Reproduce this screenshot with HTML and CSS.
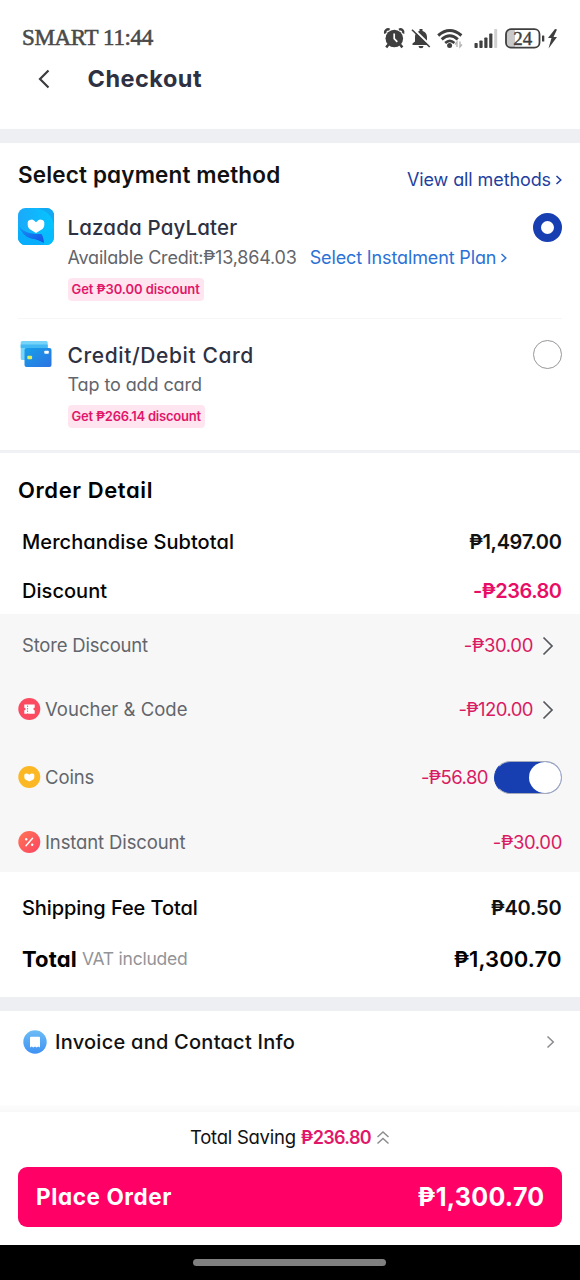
FILE: index.html
```html
<!DOCTYPE html>
<html lang="en">
<head>
<meta charset="utf-8">
<title>Checkout</title>
<link rel="stylesheet" href="styles.css">
</head>
<body>
<div class="status-bar">
  <span class="status-text">SMART 11:44</span>
  <svg class="status-icons" width="180" height="26" viewBox="0 0 180 26">
    <g fill="#3f3f3f" stroke="#3f3f3f">
      <circle cx="14.3" cy="13.5" r="8.800" stroke="none"/>
      <path d="M5.400 8.500 A3 3 0 0 1 9.600 4.700 M19 4.700 A3 3 0 0 1 23.200 8.500" fill="none" stroke-width="2.400"/>
      <path d="M8.500 19.500 L6.200 22.300 M20 19.500 L22.400 22.300" fill="none" stroke-width="2.600"/>
      <path d="M14.2 8.500 V13.700 L17.300 16.800" fill="none" stroke="#fff" stroke-width="1.700"/>
      <path d="M32.500 20 V18.500 L35 16.500 V12 C35 8.500 37.500 6.500 39.500 6 V4 H42.500 V6 C45 6.500 47 8.500 47 12 V16.500 L49 18.500 V20 Z" stroke="none"/>
      <path d="M38.500 21 H43.500 A2.500 2.300 0 0 1 38.500 21" stroke="none"/>
      <path d="M33.500 4 L51 21" stroke="#fff" stroke-width="2.200"/>
      <path d="M32 4.700 L49.700 22" stroke-width="1.600"/>
      <g fill="none" stroke-width="3">
        <path d="M58.200 10.500 Q69.800 0.500 81.400 10.500"/>
        <path d="M61.700 14.300 Q69.800 7.300 77.800 14.300"/>
        <path d="M65.200 18 Q69.800 13.800 74.400 18" stroke-width="2.600"/>
      </g>
      <circle cx="69.600" cy="20.600" r="2.500" stroke="none"/>
      <path d="M77 22 V17 L75 19.500 M80 16.500 V21.800 L82 19.500" fill="none" stroke="#b5b5b5" stroke-width="1.400"/>
      <g stroke="none">
        <rect x="94.500" y="18" width="3.200" height="5" rx=".8"/>
        <rect x="99.400" y="15.500" width="3.200" height="7.500" rx=".8"/>
        <rect x="104.300" y="12.500" width="3.200" height="10.500" rx=".8"/>
        <rect x="109.200" y="8.500" width="3.200" height="14.500" rx=".8"/>
        <rect x="114.200" y="4" width="3" height="19" rx=".8" fill="#d0d0d0"/>
      </g>
      <path d="M129 4.500 H135 V22.500 H129 Q126 22 126 19 V8 Q126 5 129 4.500" fill="#c9c9c9" stroke="none"/>
      <rect x="126" y="4.200" width="33.500" height="18.500" rx="5" fill="none" stroke-width="1.800"/>
      <rect x="162" y="10.500" width="2.300" height="6" rx=".5" stroke="none"/>
      <path d="M175 4 L168 13 H171.500 L168.500 23.500 L177 12 H173.500 L177 4.500 Z" stroke="none"/>
      <text class="battery-text" x="142.700" y="20" text-anchor="middle" stroke-width=".4">24</text>
    </g>
  </svg>
</div>
<header class="header">
  <svg width="14" height="22" viewBox="0 0 14 22"><path d="M12.500 2.500 L4 11 L12.500 19.500" fill="none" stroke="#3b3b40" stroke-width="2.200"/></svg>
  <h1 class="header-title">Checkout</h1>
</header>
<div class="band"></div>

<section class="payment">
  <div class="payment-head">
    <h2 class="section-title">Select payment method</h2>
    <a class="all-methods">View all methods<svg width="8" height="12" viewBox="0 0 8 12"><path d="M1.500 2 L5.800 6 L1.500 10" fill="none" stroke="currentColor" stroke-width="1.500"/></svg></a>
  </div>

  <div class="method">
    <svg class="method-icon" width="36" height="37" viewBox="0 0 36 37">
      <defs>
        <linearGradient id="app" x1="0" y1="0" x2="1" y2="0"><stop offset="0" stop-color="#1ba9fb"/><stop offset="1" stop-color="#04c5fd"/></linearGradient>
        <linearGradient id="fold" x1="0" y1="0" x2="1" y2="1"><stop offset="0" stop-color="#159bf8"/><stop offset="1" stop-color="#1551e6"/></linearGradient>
        <clipPath id="tile"><rect width="36" height="37" rx="7.500"/></clipPath>
      </defs>
      <g clip-path="url(#tile)">
        <rect width="36" height="37" fill="url(#app)"/>
        <path d="M20 0 H36 V16 C34 8 29 3 20 0" fill="#12a8f2"/>
        <path d="M0 16 C5 24 13 26.500 24 26 L36 20 V37 H0 Z" fill="#08bbfd"/>
        <path d="M0 17 C5 24.500 13 26.500 23.500 26 Q25.500 29 26 35 Q21 32 13 31 Q4 28 0 17" fill="url(#fold)"/>
        <path d="M0 20 Q4 28.500 13 30.500 Q22 31.500 26.500 37 H0 Z" fill="#08adfc"/>
      </g>
      <path d="M18 25 L11.500 21 Q9.700 19.700 9.700 17 V14.500 Q9.700 12.700 11.500 12 L14 11.500 Q15.500 11.500 18 14.200 Q20.500 11.500 22 11.500 L24.500 12 Q26.300 12.700 26.300 14.500 V17 Q26.300 19.700 24.500 21 Z" fill="#fff"/>
    </svg>
    <div class="method-body">
      <div class="method-name">Lazada PayLater</div>
      <div class="method-info"><span class="credit">Available Credit:₱13,864.03</span><a class="plan">Select Instalment Plan<svg width="8" height="12" viewBox="0 0 8 12"><path d="M1.500 2 L5.800 6 L1.500 10" fill="none" stroke="currentColor" stroke-width="1.500"/></svg></a></div>
      <span class="tag">Get ₱30.00 discount</span>
    </div>
    <span class="radio radio-on"></span>
  </div>

  <div class="method method-card">
    <svg class="method-icon" width="36" height="37" viewBox="0 0 36 37">
      <defs><linearGradient id="card" x1="0" y1="0" x2="1" y2="1"><stop offset="0" stop-color="#16a0e8"/><stop offset="1" stop-color="#2d72e2"/></linearGradient></defs>
      <rect x="2.700" y="5" width="27" height="19" rx="1.500" fill="#76d4fb"/>
      <rect x="2.700" y="8.500" width="27" height="3.500" fill="#42b9f2"/>
      <rect x="6.500" y="12" width="27" height="19" rx="2" fill="url(#card)"/>
      <rect x="9.300" y="19.700" width="4.800" height="3.600" rx="1" fill="#dff05e"/>
      <rect x="26.300" y="14.800" width="4.500" height="3" rx=".8" fill="#fff"/>
    </svg>
    <div class="method-body">
      <div class="method-name name-card">Credit/Debit Card</div>
      <div class="method-info">Tap to add card</div>
      <span class="tag tag-card">Get ₱266.14 discount</span>
    </div>
    <span class="radio"></span>
  </div>
</section>

<section class="order">
  <h2 class="order-title">Order Detail</h2>
  <div class="line subtotal"><span class="label">Merchandise Subtotal</span><span class="amount">₱1,497.00</span></div>
  <div class="line discount"><span class="label">Discount</span><span class="amount pink">-₱236.80</span></div>
  <div class="breakdown">
    <div class="item item-store"><span class="item-label">Store Discount</span><span class="item-amount">-₱30.00</span>
      <svg class="chevron" width="14" height="22" viewBox="0 0 14 22"><path d="M1.500 2.500 L10 11 L1.500 19.500" fill="none" stroke="#55585c" stroke-width="1.700"/></svg></div>
    <div class="item item-voucher">
      <svg class="badge" width="23" height="23" viewBox="0 0 23 23"><circle cx="11.300" cy="11" r="11" fill="#fb4b61"/><path d="M6.300 6.500 H16.700 V9.700 A1.300 1.300 0 0 0 16.700 12.300 V15.800 H6.300 V12.300 A1.300 1.300 0 0 0 6.300 9.700 Z" fill="#fff"/><path d="M9.600 7.500 V15.500" stroke="#fb4b61" stroke-width=".9" stroke-dasharray="1.500 1"/></svg>
      <span class="item-label voucher-label">Voucher &amp; Code</span><span class="item-amount amount-voucher">-₱120.00</span>
      <svg class="chevron" width="14" height="22" viewBox="0 0 14 22"><path d="M1.500 2.500 L10 11 L1.500 19.500" fill="none" stroke="#55585c" stroke-width="1.700"/></svg></div>
    <div class="item item-coins">
      <svg class="badge" width="23" height="23" viewBox="0 0 23 23"><circle cx="11.300" cy="11" r="11" fill="#fbb724"/><path d="M11.300 15.500 L7.300 13.400 Q6.300 12.700 6.300 11 V9 Q6.300 8 7.300 7.700 L8.500 7.400 Q9.600 7.200 11.300 8.700 Q13 7.200 14.100 7.400 L15.300 7.700 Q16.300 8 16.300 9 V11 Q16.300 12.700 15.300 13.400 Z" fill="#fff"/></svg>
      <span class="item-label coins-label">Coins</span><span class="item-amount amount-coins">-₱56.80</span>
      <span class="toggle"><span class="knob"></span></span></div>
    <div class="item item-instant">
      <svg class="badge" width="23" height="23" viewBox="0 0 23 23"><defs><linearGradient id="hot" x1="0" y1="0" x2="1" y2="1"><stop offset="0" stop-color="#ff7655"/><stop offset="1" stop-color="#fb4362"/></linearGradient></defs><circle cx="11.300" cy="11" r="11" fill="url(#hot)"/><path d="M8 14.700 L14.500 7.200" stroke="#fff" stroke-width="1.500" stroke-linecap="round"/><circle cx="8.200" cy="8.300" r="1.200" fill="#fff"/><circle cx="14.200" cy="13.800" r="1.200" fill="#fff"/></svg>
      <span class="item-label">Instant Discount</span><span class="item-amount">-₱30.00</span></div>
  </div>
  <div class="line shipping"><span class="label">Shipping Fee Total</span><span class="amount">₱40.50</span></div>
  <div class="line total"><span class="total-label">Total</span><span class="vat">VAT included</span><span class="total-amount">₱1,300.70</span></div>
</section>
<div class="band"></div>

<section class="invoice">
  <svg width="24" height="24" viewBox="0 0 24 24"><defs><linearGradient id="bill" x1="0" y1="0" x2="0" y2="1"><stop offset="0" stop-color="#6cbcf5"/><stop offset="1" stop-color="#3f92f4"/></linearGradient></defs><circle cx="12" cy="12" r="11.700" fill="url(#bill)"/><path d="M7 7.700 Q7 6.700 8 6.700 H16 Q17 6.700 17 7.700 V17.500 L15.300 16.500 L13.700 17.500 L12 16.500 L10.300 17.500 L8.700 16.500 L7 17.500 Z" fill="#fff"/></svg>
  <span class="invoice-label">Invoice and Contact Info</span>
  <svg width="10" height="16" viewBox="0 0 10 16"><path d="M1.500 2.500 L7.300 8 L1.500 13.500" fill="none" stroke="#8b8b8f" stroke-width="1.500"/></svg>
</section>

<footer class="footer">
  <div class="saving"><span class="saving-label">Total Saving</span><span class="saving-amount">₱236.80</span>
    <svg width="14" height="16" viewBox="0 0 14 16"><path d="M1.500 7 L7 2 L12.500 7 M1.500 13.500 L7 8.500 L12.500 13.500" fill="none" stroke="#8d8d90" stroke-width="1.500"/></svg></div>
  <button class="place"><span class="place-label">Place Order</span><span class="place-amount">₱1,300.70</span></button>
</footer>
<div class="nav"><span class="nav-pill"></span></div>
</body>
</html>
```
FILE: styles.css
```css
* { box-sizing: border-box; }
body {
  margin: 0;
  width: 580px;
  height: 1280px;
  display: flex;
  flex-direction: column;
  background: #fff;
  color: #111;
  font-family: Inter, "Open Sans", sans-serif;
  font-feature-settings: "cv11";
  line-height: 1;
  white-space: nowrap;
  overflow: hidden;
}
h1, h2 { margin: 0; font-weight: 600; }
svg { display: block; flex: none; }

.status-bar {
  height: 58px;
  padding: 18px 20px 0 22px;
  display: flex;
  justify-content: space-between;
  align-items: center;
}
.status-text { font: 23px "Liberation Serif", serif; letter-spacing: -0.35px; color: #4a4a4a; -webkit-text-stroke: 0.6px #4a4a4a; }
.battery-text { font: 19px "Liberation Serif", serif; }
.header { height: 71px; padding: 10px 0 0 36px; display: flex; align-items: flex-start; gap: 37.5px; }
.header-title { font-size: 23.5px; font-weight: 650; letter-spacing: 0.5px; line-height: 21px; color: #2e3142; }
.band { height: 14px; flex: none; background: #eeeff3; }

.payment { height: 310px; padding: 0 18px; border-bottom: 3px solid #f0f1f4; }
.payment-head { height: 62px; display: flex; justify-content: space-between; }
.section-title { font-size: 22.5px; letter-spacing: 0.15px; line-height: 64px; }
.all-methods {
  display: flex;
  align-items: center;
  gap: 4px;
  height: 74px;
  font-size: 18px;
  letter-spacing: -0.1px;
  color: #1f3f9f;
  margin-right: -1px;
}
.method { height: 113px; display: flex; align-items: flex-start; }
.method-card { height: 130px; padding-top: 14px; border-top: 1px solid #f6f6f7; }
.method-icon { margin-top: 3px; }
.method-body { flex: 1; padding-left: 13.5px; }
.method-name { height: 45px; line-height: 45px; font-size: 20.5px; font-weight: 500; letter-spacing: 0.16px; color: #2e3142; }
.name-card { height: 44px; font-size: 21px; letter-spacing: 0.6px; }
.method-info { height: 16px; display: flex; align-items: center; gap: 13px; font-size: 18px; letter-spacing: -0.1px; color: #62656b; }
.credit { letter-spacing: -0.2px; }
.plan { display: flex; align-items: center; gap: 4px; color: #2c72d6; letter-spacing: -0.13px; }
.tag {
  display: inline-block;
  height: 23px;
  margin-top: 11.5px;
  padding: 0 4px;
  border-radius: 4px;
  background: #ffe5f0;
  color: #e2176a;
  font-size: 13px;
  font-weight: 600;
  line-height: 23px;
  letter-spacing: -0.08px;
}
.tag-card { letter-spacing: -0.22px; }
.radio { width: 29px; height: 29px; margin-top: 7px; border: 1.5px solid #97979c; border-radius: 50%; }
.radio-on { margin-top: 8px; border: 8.5px solid #173fb1; }

.order { height: 544px; }
.order-title { height: 64px; padding: 4.5px 0 0 18px; font-size: 22px; line-height: 64px; letter-spacing: 0.6px; color: #000; }
.line { display: flex; align-items: center; justify-content: space-between; padding: 0 18.5px 0 22px; font-size: 20px; }
.label { font-weight: 500; color: #050505; }
.amount { font-weight: 600; letter-spacing: -0.35px; }
.pink { color: #e90e65; letter-spacing: -0.5px; }
.subtotal { height: 50px; }
.subtotal .label { letter-spacing: 0.07px; }
.discount { height: 47px; }
.discount .label { letter-spacing: 0.05px; }
.breakdown { height: 258px; background: #f7f7f7; }
.item { display: flex; align-items: center; padding: 0 18px; font-size: 18.5px; color: #62666c; }
.item-label { flex: 1; letter-spacing: -0.12px; margin-left: 4px; }
.item-amount { color: #d91b63; letter-spacing: -0.35px; }
.amount-voucher { letter-spacing: -0.55px; }
.amount-coins { letter-spacing: -0.55px; }
.voucher-label { letter-spacing: 0.02px; }
.coins-label { letter-spacing: -0.1px; }
.chevron { margin: 0 6px 0 9px; }
.item-store { height: 63px; }
.item-store .item-label { letter-spacing: -0.2px; }
.item-voucher { height: 65px; }
.item-coins { height: 70px; }
.item-instant { height: 60px; }
.toggle {
  width: 68px;
  height: 33px;
  margin-left: 6px;
  border: 1px solid #a4aab8;
  border-left-color: #173fb1;
  border-radius: 17px;
  background: #173fb1;
  display: flex;
  justify-content: flex-end;
}
.knob { width: 32px; height: 31px; border-radius: 50%; background: #fff; }
.shipping { height: 72px; }
.shipping .label { letter-spacing: -0.07px; }
.shipping .amount { letter-spacing: -0.18px; }
.total { height: 29px; color: #000; }
.total-label { font-size: 22px; font-weight: 700; letter-spacing: 0.15px; }
.vat { flex: 1; margin-left: 5px; font-size: 17.5px; letter-spacing: -0.25px; color: #929498; }
.total-amount { font-size: 22px; font-weight: 600; letter-spacing: 0.1px; }

.invoice { height: 94px; padding: 19px 24px 0 23px; display: flex; align-items: flex-start; }
.invoice-label { flex: 1; margin-left: 8px; font-size: 20px; font-weight: 500; line-height: 24px; letter-spacing: 0.25px; }
.invoice svg:last-child { margin-top: 4px; }
.footer { height: 140px; padding: 13px 18px 0; background: linear-gradient(#fdfdfd 0, #f8f8f8 7px, #fff 7px); }
.saving { height: 39px; display: flex; align-items: center; justify-content: center; font-size: 18.5px; margin-bottom: 10px; }
.saving-label { letter-spacing: -0.25px; }
.saving-amount { margin: 0 5px; font-size: 18px; font-weight: 600; letter-spacing: -0.65px; color: #e2176a; }
.place {
  width: 100%;
  height: 60px;
  padding: 0 17.5px 0 18px;
  border: 0;
  border-radius: 9px;
  background: #ff0066;
  color: #fff;
  font: inherit;
  font-feature-settings: "cv11";
  display: flex;
  align-items: center;
  justify-content: space-between;
}
.place-label { font-size: 22.5px; font-weight: 650; letter-spacing: 0.6px; }
.place-amount { font-size: 25px; font-weight: 650; letter-spacing: 0.3px; }
.nav { height: 35px; display: flex; justify-content: center; padding: 14px 1px 0 0; background: #000; }
.nav-pill { width: 193px; height: 7px; border-radius: 4px; background: #808080; }
```
